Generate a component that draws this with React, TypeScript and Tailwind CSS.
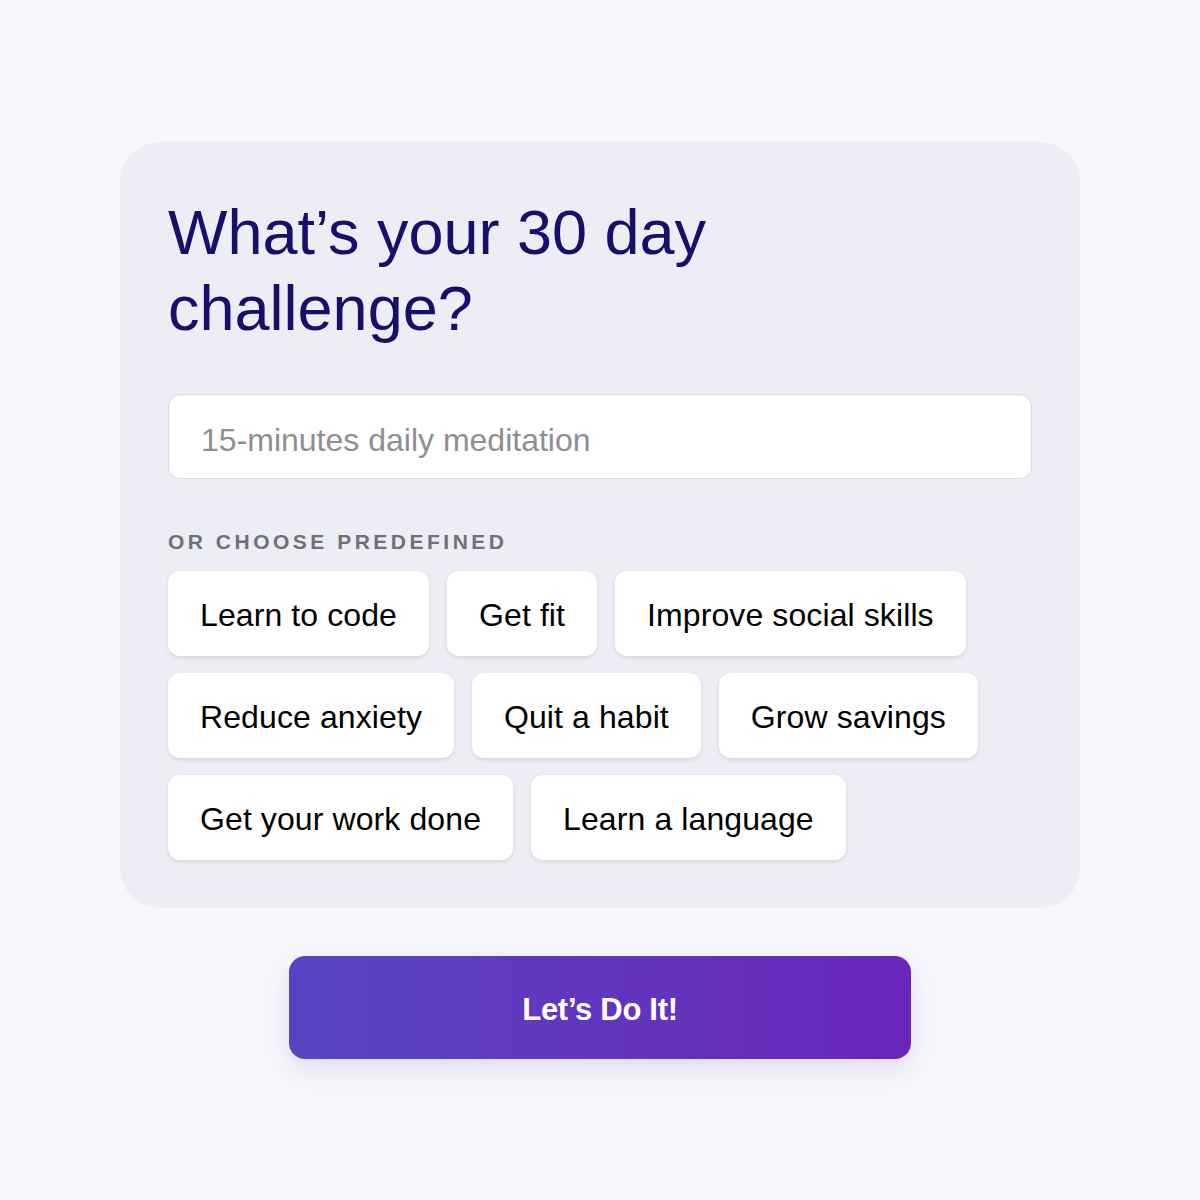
import { useState } from "react";

const rows = [
  ["Learn to code", "Get fit", "Improve social skills"],
  ["Reduce anxiety", "Quit a habit", "Grow savings"],
  ["Get your work done", "Learn a language"],
];

export default function App() {
  const [goal, setGoal] = useState("");

  return (
    <div className="min-h-[1200px] w-full bg-[#f6f7fb] flex flex-col items-center pt-[142px] font-['Liberation_Sans',Arial,sans-serif]">
      {/* Card */}
      <div className="w-[960px] rounded-[40px] bg-[#ededf5] px-12 pt-[52px] pb-12">
        <h1 className="text-[63px] leading-[76px] font-normal text-[#1a0e6c]">
          What’s your 30 day
          <br />
          challenge?
        </h1>

        <input
          type="text"
          value={goal}
          onChange={(e) => setGoal(e.target.value)}
          placeholder="15-minutes daily meditation"
          className="mt-12 block w-full h-[85px] rounded-xl border border-[#dadae2] bg-white px-8 pt-[7px] text-[32px] text-black placeholder:text-[#8e8e93] shadow-[inset_0_1px_2px_rgba(0,0,0,0.06)] focus:outline-none"
        />

        <p className="mt-[51px] text-[21px] leading-[24px] font-bold tracking-[3.5px] text-[#707078]">
          OR CHOOSE PREDEFINED
        </p>

        {/* Chips */}
        <div className="mt-[17px] flex flex-col gap-[17px]">
          {rows.map((row, i) => (
            <div key={i} className="flex gap-[18px]">
              {row.map((label) => (
                <button
                  key={label}
                  type="button"
                  onClick={() => setGoal(label)}
                  className="h-[85px] rounded-xl bg-white px-8 pt-[3px] text-[32px] tracking-[0.1px] text-black shadow-[0_2px_4px_rgba(0,0,0,0.1)] whitespace-nowrap"
                >
                  {label}
                </button>
              ))}
            </div>
          ))}
        </div>
      </div>

      <button
        type="button"
        className="mt-12 w-[622px] h-[103px] rounded-2xl bg-gradient-to-r from-[#5744c3] to-[#6a24b9] pt-[6px] text-white text-[31px] font-bold tracking-[-0.3px] shadow-[0_10px_24px_rgba(98,60,200,0.14)]"
      >
        Let’s Do It!
      </button>
    </div>
  );
}
